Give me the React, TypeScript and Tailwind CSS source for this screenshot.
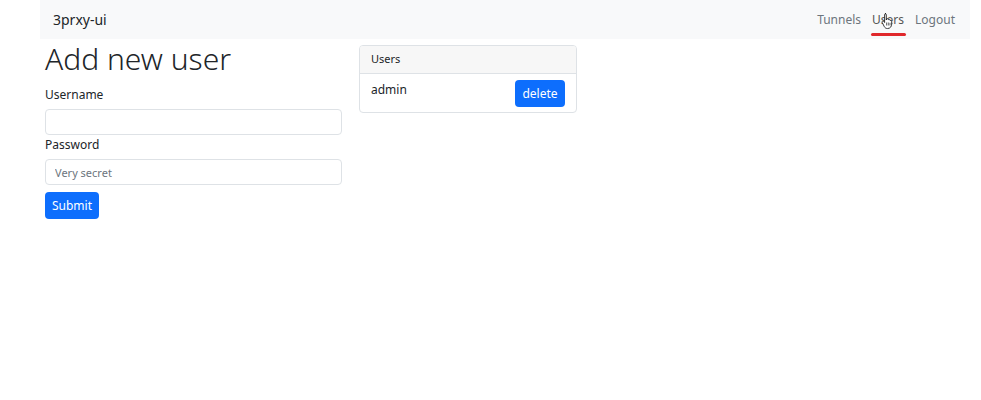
export default function App() {
  return (
    <div className="w-[981px] h-[400px] bg-white relative text-[#212529]" style={{ fontFamily: '"Noto Sans", "Open Sans", sans-serif' }}>
      <div className="ml-[40px] mr-[11px] h-[39px] bg-[#f8f9fa] flex items-center justify-between px-[13px]">
        <span className="text-[14px]">3prxy-ui</span>
        <div className="flex gap-[11px] text-[12px] text-[#6c757d] mr-[2px]">
          <span>Tunnels</span>
          <span className="relative text-[#555]">Users
            <span className="absolute left-[-1px] top-[22px] w-[35px] h-[3px] bg-[#e0282c] rounded"></span>
            <svg className="absolute left-[9px] top-[1px]" width="14" height="18" viewBox="0 0 14 18">
              <path d="M4 1.5c.8 0 1.3.6 1.3 1.3V8l.3-1.2c.6-.4 1.4-.2 1.6.5l.2.4c.5-.5 1.4-.3 1.6.4l.1.4c.6-.4 1.5 0 1.6.7V12c0 2.4-1.5 4.5-4 4.5H6.2c-1.3 0-2.3-.8-2.9-1.9L1.2 10.5c-.3-.6 0-1.3.6-1.4.5-.1.9.1 1.2.5l.6.9V2.8c0-.7.5-1.3 1.3-1.3z" fill="white" stroke="#222" strokeWidth="0.9"/>
              <path d="M7.3 10.5v3M9 10.8v2.7M5.6 10.5v3" stroke="#222" strokeWidth="0.7"/>
            </svg>
          </span>
          <span>Logout</span>
        </div>
      </div>
      <div className="ml-[45px] flex gap-[17px] items-start">
        <div className="w-[297px]">
          <h1 className="text-[30px] font-light leading-[36px] mt-[2px]">Add new user</h1>
          <div className="text-[12px] mt-[10px] leading-[16px]">Username</div>
          <input className="mt-[6px] w-full h-[26px] border border-[#dee2e6] rounded-[4px] block" />
          <div className="text-[12px] mt-[2px] leading-[16px]">Password</div>
          <input placeholder="Very secret" className="mt-[6px] w-full h-[26px] border border-[#dee2e6] rounded-[4px] px-[9px] text-[11px] placeholder:text-[#6c757d] block" />
          <button className="mt-[7px] w-[54px] h-[27px] bg-[#0d6efd] text-white text-[12px] rounded-[4px]">Submit</button>
        </div>
        <div className="w-[218px] mt-[6px] border border-[#dee2e6] rounded-[4px] overflow-hidden">
          <div className="h-[28px] bg-[#f7f7f7] border-b border-[#dee2e6] px-[11px] flex items-center text-[11px]">Users</div>
          <div className="flex justify-between px-[11px] pt-[7px] pb-[5px]">
            <span className="text-[12px]">admin</span>
            <button className="w-[50px] h-[27px] bg-[#0d6efd] text-white text-[12px] rounded-[4px] mt-[-1px]">delete</button>
          </div>
        </div>
      </div>
    </div>
  );
}
